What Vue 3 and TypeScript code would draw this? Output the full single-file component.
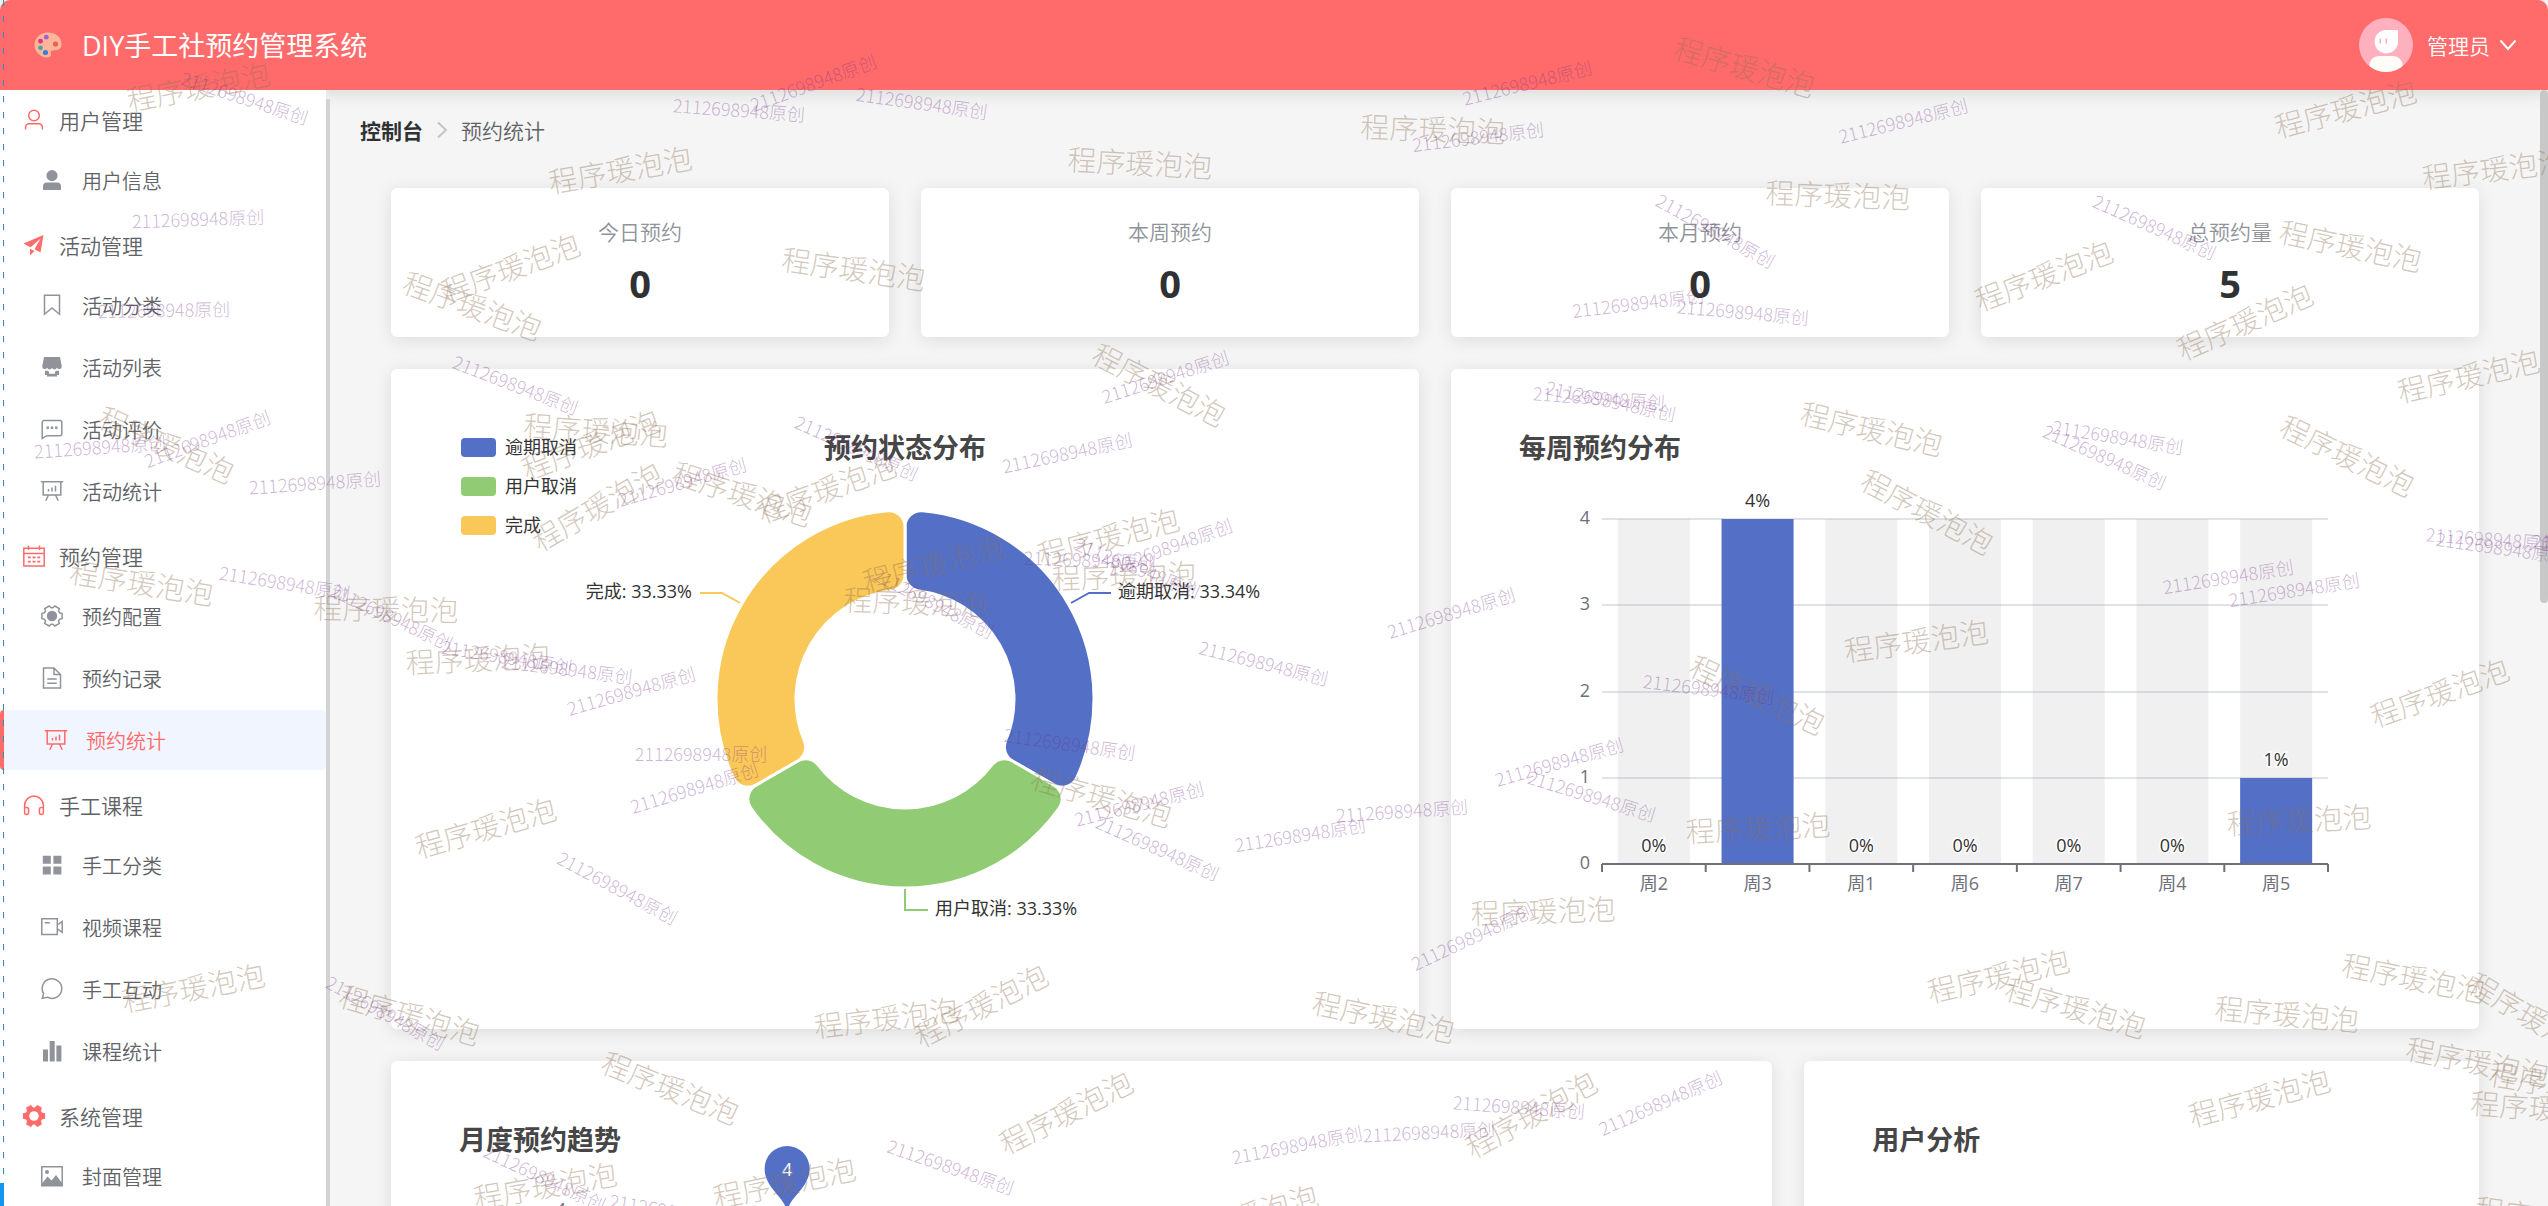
<script setup lang="ts">
interface MenuItem {
  label: string
  icon: string
  active?: boolean
}
interface MenuGroup {
  label: string
  icon: string
  items: MenuItem[]
}

const groups: MenuGroup[] = [
  { label: '用户管理', icon: 'user', items: [{ label: '用户信息', icon: 'userFilled' }] },
  {
    label: '活动管理',
    icon: 'promotion',
    items: [
      { label: '活动分类', icon: 'tag' },
      { label: '活动列表', icon: 'shop' },
      { label: '活动评价', icon: 'chatSquare' },
      { label: '活动统计', icon: 'board' },
    ],
  },
  {
    label: '预约管理',
    icon: 'calendar',
    items: [
      { label: '预约配置', icon: 'config' },
      { label: '预约记录', icon: 'document' },
      { label: '预约统计', icon: 'board', active: true },
    ],
  },
  {
    label: '手工课程',
    icon: 'headset',
    items: [
      { label: '手工分类', icon: 'menu' },
      { label: '视频课程', icon: 'video' },
      { label: '手工互动', icon: 'chatRound' },
      { label: '课程统计', icon: 'histogram' },
    ],
  },
  { label: '系统管理', icon: 'tools', items: [{ label: '封面管理', icon: 'picture' }] },
]

function gear(outer: number, inner: number): string {
  const points: string[] = []
  for (let k = 0; k < 6; k++) {
    const steps: [number, number][] = [[-24, inner], [-14, outer], [14, outer], [24, inner]]
    for (const [offset, radius] of steps) {
      const a = ((k * 60 + offset) * Math.PI) / 180
      points.push(`${(12 + radius * Math.cos(a)).toFixed(2)} ${(12 + radius * Math.sin(a)).toFixed(2)}`)
    }
  }
  return `M${points.join('L')}Z`
}

/* stroke: outlined part, fill: solid part; all on a 24 x 24 grid */
const icons: Record<string, { stroke?: string; fill?: string }> = {
  user: { stroke: 'M12 2.2a5.3 5.3 0 1 1 0 10.6a5.3 5.3 0 0 1 0-10.6M3.6 21.5v-2.3a3.4 3.4 0 0 1 3.4-3.4h10a3.4 3.4 0 0 1 3.4 3.4v2.3' },
  userFilled: { fill: 'M12 2a5.3 5.3 0 1 1 0 11.2a5.3 5.3 0 0 1 0-11.2M3 22v-3.600a3.800 3.800 0 0 1 3.800-3.800h10.400a3.800 3.800 0 0 1 3.800 3.800v3.600z' },
  promotion: { fill: 'M1.500 10.500L21.500 2L18.500 19.500L12.500 16.200L18.700 5.500L8.600 14.200ZM8 15.800L12.500 18L8 22.500Z' },
  tag: { stroke: 'M4.500 2.200h15v19l-7.500-6.300l-7.500 6.300z' },
  shop: { fill: 'M4 2h16l1.800 9.500a2.600 2.600 0 0 1-4.900 1.200a2.600 2.600 0 0 1-4.900 0a2.600 2.600 0 0 1-4.900 0a2.600 2.600 0 0 1-4.900-1.200ZM5 15.800h2.600l1.400 1v2h6v-2l1.400-1h2.600v4.200h-2v1.500h-10v-1.500h-2z' },
  chatSquare: { stroke: 'M4.200 3.500h15.600a2 2 0 0 1 2 2v11.200a2 2 0 0 1-2 2h-13l-4.600 2.700v-15.900a2 2 0 0 1 2-2', fill: 'M6.500 9.600h2.400v2.400h-2.400zM10.800 9.600h2.400v2.400h-2.400zM15.100 9.600h2.400v2.400h-2.400z' },
  board: { stroke: 'M.8 2.800h22.400M3.200 2.800v13.200h17.600v-13.200M8.500 16l-2.700 5.800M15.500 16l2.700 5.800M8.500 12.500v-2.500M12 12.500v-4M15.500 12.500v-5.800' },
  calendar: { stroke: 'M1.800 4.200h20.400v17.800h-20.400zM1.800 9.500h20.400M6.500 1.500v4.500M17.500 1.500v4.500', fill: 'M5.800 12.500h3v1.700h-3zM10.500 12.500h3v1.700h-3zM15.200 12.500h3v1.700h-3zM5.800 16.700h3v1.700h-3zM10.500 16.700h3v1.700h-3zM15.200 16.700h3v1.700h-3z' },
  config: { stroke: gear(10.4, 8.2), fill: 'M12 6.800a5.200 5.200 0 1 1 0 10.400a5.200 5.200 0 0 1 0-10.400' },
  document: { stroke: 'M3.500 2h10.500l6.500 6.500v13.500h-17zM14 2v6.500h6.500M7.300 13h9.400M7.300 17.300h9.400' },
  headset: { stroke: 'M2.600 17v-4.500a9.400 9.400 0 0 1 18.800 0v4.500M2.600 14.500h2a2 2 0 0 1 2 2v3a2 2 0 0 1-4 0zM21.400 14.500h-2a2 2 0 0 0-2 2v3a2 2 0 0 0 4 0z' },
  menu: { fill: 'M2.800 2.800h8v8h-8zM13.400 2.800h8v8h-8zM2.800 13.400h8v8h-8zM13.400 13.400h8v8h-8z' },
  video: { stroke: 'M1.800 3.800h15.500v15.800h-15.500zM17.300 10l4.900-3.500v10.800l-4.900-3.500M4.800 7.800h5' },
  chatRound: { stroke: 'M2.300 21.300l1.300-4.600a9.800 9.800 0 1 1 3.700 3.500z' },
  histogram: { fill: 'M3 10.500h5v12h-5zM9.700 2h5v20.500h-5zM16.400 6.500h5v16h-5z' },
  tools: { fill: gear(11.4, 8.6) + 'M12 7.200a4.800 4.800 0 1 0 0 9.600a4.800 4.800 0 0 0 0-9.600' },
  picture: { stroke: 'M1.800 2.800h20.400v19h-20.400z', fill: 'M2 19.500l5.500-7l4 4l4.500-5.500l6 8v2.500h-20zM7 6a2 2 0 1 1 0 4a2 2 0 0 1 0-4' },
}

const stats = [
  { label: '今日预约', value: 0 },
  { label: '本周预约', value: 0 },
  { label: '本月预约', value: 0 },
  { label: '总预约量', value: 5 },
]

/* Ring sector with rounded corners; angles in degrees, 0 at the top, clockwise */
function sector(from: number, to: number): string {
  const outer = 189
  const inner = 109
  const corner = 16
  const a0 = ((from - 90) * Math.PI) / 180
  const a1 = ((to - 90) * Math.PI) / 180
  const dOut = Math.asin(corner / (outer - corner))
  const dIn = Math.asin(corner / (inner + corner))
  const eOut = Math.sqrt((outer - corner) ** 2 - corner ** 2)
  const eIn = Math.sqrt((inner + corner) ** 2 - corner ** 2)
  const p = (r: number, a: number) => `${(514 + r * Math.cos(a)).toFixed(2)} ${(330 + r * Math.sin(a)).toFixed(2)}`
  const c = `A${corner} ${corner} 0 0 1 `
  return [
    `M${p(eOut, a0)}`, c + p(outer, a0 + dOut),
    `A${outer} ${outer} 0 0 1 ${p(outer, a1 - dOut)}`, c + p(eOut, a1),
    `L${p(eIn, a1)}`, c + p(inner, a1 - dIn),
    `A${inner} ${inner} 0 0 0 ${p(inner, a0 + dIn)}`, c + p(eIn, a0), 'Z',
  ].join('')
}

const slices = [
  { name: '逾期取消', percent: '33.34%', color: '#5470c6', path: sector(0, 120), line: '680,234 698,224 720,224', x: 727, y: 229, anchor: 'start' as const },
  { name: '用户取消', percent: '33.33%', color: '#91cc75', path: sector(120, 240), line: '514,520 514,541 537,541', x: 544, y: 546, anchor: 'start' as const },
  { name: '完成', percent: '33.33%', color: '#fac858', path: sector(240, 360), line: '349,234 331,224 309,224', x: 301, y: 229, anchor: 'end' as const },
]

const axis = { left: 151, right: 877, top: 150, bottom: 495, max: 4 }
const ticks = [0, 1, 2, 3, 4]
const weekly = [
  { day: '周2', value: 0 },
  { day: '周3', value: 4 },
  { day: '周1', value: 0 },
  { day: '周6', value: 0 },
  { day: '周7', value: 0 },
  { day: '周4', value: 0 },
  { day: '周5', value: 1 },
]
const band = (axis.right - axis.left) / weekly.length
const barWidth = 72
const centerX = (i: number) => axis.left + band * (i + 0.5)
const valueY = (v: number) => Math.round(axis.bottom - ((axis.bottom - axis.top) * v) / axis.max)

/* Watermark stamps: centre x, centre y, rotation */
type Mark = [number, number, number]
const nameMarks: Mark[] = [
  [198, 86, -11], [510, 267, -20], [473, 305, 20], [620, 169, -10], [167, 444, 24], [142, 582, 9],
  [386, 608, 1], [478, 658, -3], [596, 429, 4], [590, 444, -21], [596, 506, -30], [743, 493, 18],
  [826, 488, -20], [933, 563, -15], [916, 601, 2], [1108, 536, -15], [1124, 575, -2], [1102, 796, 16],
  [485, 827, -16], [193, 987, -11], [410, 1014, 16], [671, 1087, 22], [545, 1185, -10], [1140, 162, 3],
  [854, 268, 8], [1160, 384, 27], [886, 1017, -7], [980, 1005, -27], [1065, 1112, -27], [784, 1182, -12],
  [1247, 1214, -16], [1745, 66, 16], [1433, 128, 2], [1838, 194, 2], [1872, 428, 13], [1928, 511, 28],
  [1758, 694, 25], [1916, 640, -8], [1758, 827, -3], [1543, 910, -2], [1384, 1016, 12], [1530, 1114, -29],
  [2345, 108, -15], [2494, 168, -7], [2043, 275, -21], [2351, 245, 12], [2244, 321, -24], [2468, 375, -13],
  [2348, 455, 26], [2439, 692, -20], [2299, 819, -3], [1998, 975, -13], [2076, 1007, 16], [2287, 1013, 5],
  [2414, 977, 11], [2534, 1017, 31], [2478, 1061, 11], [2561, 1085, 10], [2259, 1097, -15], [2543, 1107, 4],
  [2547, 1217, 8],
]
const numberMarks: Mark[] = [
  [245, 98, 18], [198, 219, -2], [164, 310, -1], [516, 385, 21], [100, 447, -4], [207, 439, -20],
  [315, 483, -4], [285, 583, 9], [392, 617, 25], [507, 657, 9], [567, 669, 7], [631, 691, -16],
  [682, 482, -16], [857, 448, 24], [1067, 453, -12], [1165, 377, -18], [1090, 560, 2], [1169, 547, -20],
  [1138, 568, 22], [934, 603, 27], [1264, 663, 14], [1070, 744, 8], [701, 754, 0], [694, 788, -17],
  [1139, 804, -14], [1158, 848, 24], [1300, 835, -9], [1402, 811, -4], [618, 888, 28], [386, 1013, 29],
  [545, 1178, 25], [675, 1212, 10], [951, 1167, 19], [1297, 1145, -11], [739, 110, 4], [813, 83, -20],
  [922, 103, 8], [1527, 83, -14], [1478, 137, -7], [1903, 121, -14], [1716, 231, 29], [1638, 303, -7],
  [1743, 312, 5], [1599, 398, 4], [1611, 401, 12], [1451, 613, -17], [1709, 689, 7], [1559, 762, -16],
  [1592, 796, 17], [1472, 937, -25], [1519, 1107, 4], [1429, 1132, -3], [1660, 1103, -24], [2155, 227, 24],
  [2118, 437, 9], [2105, 457, 24], [2228, 577, -9], [2294, 590, -9], [2492, 539, 4], [2502, 548, 8],
  [2598, 547, 5],
]
const place = ([x, y, r]: Mark) => `translate(${x} ${y}) rotate(${r})`
</script>

<template>
  <div class="page">
    <header class="topbar">
      <div class="brand">
        <svg class="palette" viewBox="0 0 28 26" aria-hidden="true">
          <path fill="#ffb59a" d="M14 .5C6.500 .5 .5 6 .5 12.800S6 25.500 13 25.500c3 0 4.500-1.500 4-3.500c-.4-1.700-.5-3.500 2-3.600c3.500-.1 8.500-.4 8.500-6.400C27.500 5 21.500 .5 14 .5"/>
          <circle cx="6.500" cy="9.200" r="2.400" fill="#e0357f"/>
          <circle cx="12.300" cy="5.200" r="2.400" fill="#a05fd6"/>
          <circle cx="6.500" cy="15.800" r="2.400" fill="#45a8a0"/>
          <circle cx="11.500" cy="20.500" r="2.600" fill="#3f7fd0"/>
          <circle cx="21.500" cy="12" r="2.600" fill="#e8624e"/>
        </svg>
        <h1 class="brand-name">DIY手工社预约管理系统</h1>
      </div>
      <button type="button" class="account">
        <svg class="avatar" viewBox="0 0 54 54" aria-hidden="true">
          <defs><clipPath id="avatar-clip"><circle cx="27" cy="27" r="27"/></clipPath></defs>
          <g clip-path="url(#avatar-clip)">
            <rect width="54" height="54" fill="#ffb0bf"/>
            <path fill="#fff" d="M27 12h12v12a11.700 11.700 0 1 1-12-12"/>
            <path fill="#ffb0bf" d="M20.500 20.500h1.500v5h-1.500zM26.500 20.500h1.500v5h-1.500z"/>
            <path fill="#fffdf8" d="M10.500 54V47a9 9 0 0 1 9-9h15a9 9 0 0 1 9 9v7z"/>
          </g>
        </svg>
        <span>管理员</span>
        <svg class="chevron" viewBox="0 0 18 12" aria-hidden="true"><path d="M1.500 1.500L9 10L16.500 1.500"/></svg>
      </button>
    </header>

    <div class="body">
      <nav class="sidebar">
        <section v-for="group in groups" :key="group.label">
          <button type="button" class="group-title">
            <svg class="icon" viewBox="0 0 24 24" aria-hidden="true">
              <path v-if="icons[group.icon].fill" class="solid" :d="icons[group.icon].fill" />
              <path v-if="icons[group.icon].stroke" class="outline" :d="icons[group.icon].stroke" />
            </svg>
            <span>{{ group.label }}</span>
          </button>
          <ul class="group-items">
            <li v-for="item in group.items" :key="item.label">
              <a href="#" class="item" :class="{ active: item.active }">
                <svg class="icon" viewBox="0 0 24 24" aria-hidden="true">
                  <path v-if="icons[item.icon].fill" class="solid" :d="icons[item.icon].fill" />
                  <path v-if="icons[item.icon].stroke" class="outline" :d="icons[item.icon].stroke" />
                </svg>
                <span>{{ item.label }}</span>
              </a>
            </li>
          </ul>
        </section>
      </nav>
      <div class="side-track"></div>

      <main class="content">
        <div class="breadcrumb">
          <a href="#" class="crumb-root">控制台</a>
          <svg class="crumb-arrow" viewBox="0 0 12 18" aria-hidden="true"><path d="M2 1.500L10 9L2 16.500"/></svg>
          <span>预约统计</span>
        </div>

        <div class="cards">
          <section v-for="stat in stats" :key="stat.label" class="card stat">
            <div class="stat-label">{{ stat.label }}</div>
            <div class="stat-value">{{ stat.value }}</div>
          </section>

          <section class="card chart half">
            <ul class="legend">
              <li v-for="slice in slices" :key="slice.name">
                <i class="swatch" :style="{ background: slice.color }"></i>{{ slice.name }}
              </li>
            </ul>
            <h2 class="chart-title middle">预约状态分布</h2>
            <svg class="plot" viewBox="0 0 1028 660" role="img" aria-label="预约状态分布">
              <g v-for="slice in slices" :key="slice.name">
                <path :d="slice.path" :fill="slice.color" stroke="#fff" stroke-width="3" />
                <polyline :points="slice.line" fill="none" :stroke="slice.color" stroke-width="2" />
                <text class="label" :x="slice.x" :y="slice.y" :text-anchor="slice.anchor">{{ slice.name }}: {{ slice.percent }}</text>
              </g>
            </svg>
          </section>

          <section class="card chart half">
            <h2 class="chart-title">每周预约分布</h2>
            <svg class="plot" viewBox="0 0 1028 660" role="img" aria-label="每周预约分布">
              <g v-for="tick in ticks" :key="tick">
                <line v-if="tick" class="grid-line" :x1="axis.left" :x2="axis.right" :y1="valueY(tick)" :y2="valueY(tick)" />
                <text class="axis-label" x="139" :y="valueY(tick) + 5" text-anchor="end">{{ tick }}</text>
              </g>
              <g v-for="(bar, i) in weekly" :key="bar.day">
                <rect class="bar-back" :x="centerX(i) - barWidth / 2" :y="axis.top" :width="barWidth" :height="axis.bottom - axis.top" />
                <rect :x="centerX(i) - barWidth / 2" :y="valueY(bar.value)" :width="barWidth" :height="axis.bottom - valueY(bar.value)" fill="#5470c6" />
                <text class="label halo" :x="centerX(i)" :y="valueY(bar.value) - 12" text-anchor="middle">{{ bar.value }}%</text>
                <text class="axis-label" :x="centerX(i)" y="521" text-anchor="middle">{{ bar.day }}</text>
              </g>
              <path class="axis-line" :d="`M${axis.left} ${axis.bottom}H${axis.right}`" />
              <path v-for="n in weekly.length + 1" :key="n" class="axis-line" :d="`M${axis.left + band * (n - 1)} ${axis.bottom}v8`" />
            </svg>
          </section>

          <section class="card chart wide">
            <h2 class="chart-title">月度预约趋势</h2>
            <svg class="plot" viewBox="0 0 1381 660" role="img" aria-label="月度预约趋势">
              <text class="axis-label" x="175" y="155" text-anchor="end">4</text>
              <path fill="#5470c6" d="M396 151C394 136 373.500 127 373.500 107.500a22.500 22.500 0 0 1 45 0C418.500 127 398 136 396 151"/>
              <text class="pin-label" x="396" y="115" text-anchor="middle">4</text>
            </svg>
          </section>

          <section class="card chart narrow">
            <h2 class="chart-title">用户分析</h2>
          </section>
        </div>
      </main>
      <div class="page-track"><div class="page-thumb"></div></div>
    </div>

    <svg class="watermark" aria-hidden="true">
      <g transform="translate(0 -1)">
        <text v-for="(mark, i) in nameMarks" :key="'n' + i" class="mark-name" :transform="place(mark)">程序瑗泡泡</text>
        <text v-for="(mark, i) in numberMarks" :key="'q' + i" class="mark-number" :transform="place(mark)">2112698948原创</text>
      </g>
    </svg>
    <div class="guide"></div>
    <div class="guide-end"></div>
  </div>
</template>

<style>
body {
  margin: 0;
  background: #f4f8f8;
}
</style>

<style scoped>
.page {
  position: relative;
  display: flex;
  flex-direction: column;
  height: 100vh;
  overflow: hidden;
  font-family: "Open Sans", "Noto Sans CJK SC", sans-serif;
  font-size: 21px;
  font-weight: 350;
  color: #606266;
}
button {
  border: 0;
  padding: 0;
  background: none;
  font: inherit;
  color: inherit;
}
a {
  color: inherit;
  text-decoration: none;
}
ul {
  list-style: none;
  margin: 0;
  padding: 0;
}
h1,
h2 {
  margin: 0;
}

.topbar {
  z-index: 1;
  flex: none;
  display: flex;
  justify-content: space-between;
  align-items: center;
  height: 90px;
  padding: 0 31px 0 34px;
  box-sizing: border-box;
  border-radius: 10px 10px 0 0;
  background: #ff6b6b;
  box-shadow: 0 3px 18px rgba(0, 0, 0, 0.12);
  color: #fff;
}
.brand {
  display: flex;
  align-items: center;
  gap: 20px;
}
.palette {
  width: 28px;
  height: 26px;
}
.brand-name {
  padding-top: 2px;
  font-size: 27px;
  line-height: 40px;
  font-weight: 400;
}
.account {
  display: flex;
  align-items: center;
  font-size: 21px;
}
.avatar {
  width: 54px;
  height: 54px;
  margin-right: 14px;
}
.chevron {
  width: 18px;
  height: 12px;
  margin-left: 9px;
  fill: none;
  stroke: #fff;
  stroke-width: 2;
}

.body {
  flex: 1;
  min-height: 0;
  display: flex;
}
.sidebar {
  z-index: 2;
  flex: none;
  display: flex;
  flex-direction: column;
  gap: 9px;
  width: 326px;
  padding-top: 5px;
  box-sizing: border-box;
  overflow: hidden;
  background: #fff;
}
.group-title {
  display: flex;
  align-items: center;
  gap: 13px;
  width: 100%;
  height: 50px;
  margin-bottom: 4px;
  padding-left: 22px;
  font-size: 21px;
}
.group-title .icon {
  color: #ff6b6b;
}
.icon {
  flex: none;
  width: 24px;
  height: 24px;
}
.solid {
  fill: currentColor;
  fill-rule: evenodd;
}
.outline {
  fill: none;
  stroke: currentColor;
  stroke-width: 1.5;
}
.item {
  display: flex;
  align-items: center;
  gap: 18px;
  height: 60px;
  margin: 1px 0;
  padding-left: 40px;
  border-radius: 4px;
  font-size: 20px;
}
.group-items {
  display: flex;
  flex-direction: column;
}
.item .icon {
  color: #909399;
}
.item.active {
  border-left: 4px solid #ff6b6b;
  background: #f0f5ff;
  color: #ff6b6b;
}
.item.active .icon {
  color: #ff6b6b;
}
.side-track {
  z-index: 2;
  flex: none;
  width: 4px;
  margin-top: 9px;
  background: #d3d3d3;
}

.content {
  flex: 1;
  min-width: 0;
  overflow: hidden;
  padding: 24px 61px 0;
  background: #f5f5f5;
}
.breadcrumb {
  display: flex;
  align-items: center;
  gap: 13px;
  height: 32px;
  margin: 0 -31px 42px;
}
.crumb-root {
  font-weight: 700;
  color: #303133;
}
.crumb-arrow {
  width: 12px;
  height: 18px;
  fill: none;
  stroke: #c0c4cc;
  stroke-width: 2;
}
.cards {
  display: grid;
  grid-template-columns: repeat(12, minmax(0, 1fr));
  gap: 32px;
}
.card {
  border-radius: 6px;
  background: #fff;
  box-shadow: 0 3px 18px rgba(0, 0, 0, 0.1);
}
.stat {
  grid-column: span 3;
  padding: 28px 0 32px;
  text-align: center;
}
.stat-label {
  margin-bottom: 13px;
  line-height: 32px;
  color: #909399;
}
.stat-value {
  font-size: 38px;
  line-height: 44px;
  font-weight: 700;
  color: #303133;
}
.chart {
  display: grid;
  grid-template-columns: 1fr auto 1fr;
  grid-template-rows: auto 1fr;
  align-items: start;
  font-weight: 400;
}
.half {
  grid-column: span 6;
}
.wide {
  grid-column: span 8;
}
.narrow {
  grid-column: span 4;
}
.plot {
  grid-area: 1 / 1 / 3 / 4;
  display: block;
  width: 100%;
}
.chart-title {
  grid-area: 1 / 1 / 2 / 4;
  padding: 60px 68px 0;
  font-size: 27px;
  line-height: 38px;
  font-weight: 700;
  color: #464646;
}
.chart-title.middle {
  grid-area: 1 / 2 / 2 / 3;
  padding: 60px 0 0;
}
.legend {
  grid-area: 1 / 1 / 2 / 2;
  padding: 59px 0 0 70px;
  font-size: 18px;
  line-height: 39px;
  color: #333;
}
.legend li {
  display: flex;
  align-items: center;
  gap: 9px;
}
.swatch {
  width: 35px;
  height: 19px;
  border-radius: 4px;
}
.label {
  font-size: 18px;
  fill: #333;
}
.halo {
  stroke: #fff;
  stroke-width: 3;
  paint-order: stroke;
}
.axis-label {
  font-size: 18px;
  fill: #6e7079;
}
.axis-line {
  fill: none;
  stroke: #6e7079;
  stroke-width: 2;
}
.grid-line {
  stroke: #dfe2e8;
  stroke-width: 2;
}
.bar-back {
  fill: rgba(180, 180, 180, 0.2);
}
.pin-label {
  font-size: 18px;
  fill: #fff;
}
.page-track {
  z-index: 2;
  flex: none;
  width: 8px;
  background: #f5f5f5;
}
.page-thumb {
  height: 46%;
  border-radius: 4px;
  background: #c8c8c8;
}

.watermark {
  position: absolute;
  inset: 0;
  z-index: 3;
  width: 100%;
  height: 100%;
  pointer-events: none;
  font-family: "Noto Sans CJK SC", sans-serif;
  font-weight: 300;
  text-anchor: middle;
  dominant-baseline: central;
}
.mark-name {
  font-size: 29px;
  fill: rgba(140, 110, 80, 0.38);
}
.mark-number {
  font-size: 18px;
  fill: rgba(115, 45, 135, 0.36);
}
.guide {
  position: absolute;
  top: 0;
  bottom: 23px;
  left: 3px;
  z-index: 4;
  width: 1px;
  background: repeating-linear-gradient(#2c8fae 0 6px, transparent 6px 16px);
}
.guide-end {
  position: absolute;
  bottom: 0;
  left: 0;
  z-index: 4;
  width: 4px;
  height: 23px;
  background: #1296f0;
}
</style>
